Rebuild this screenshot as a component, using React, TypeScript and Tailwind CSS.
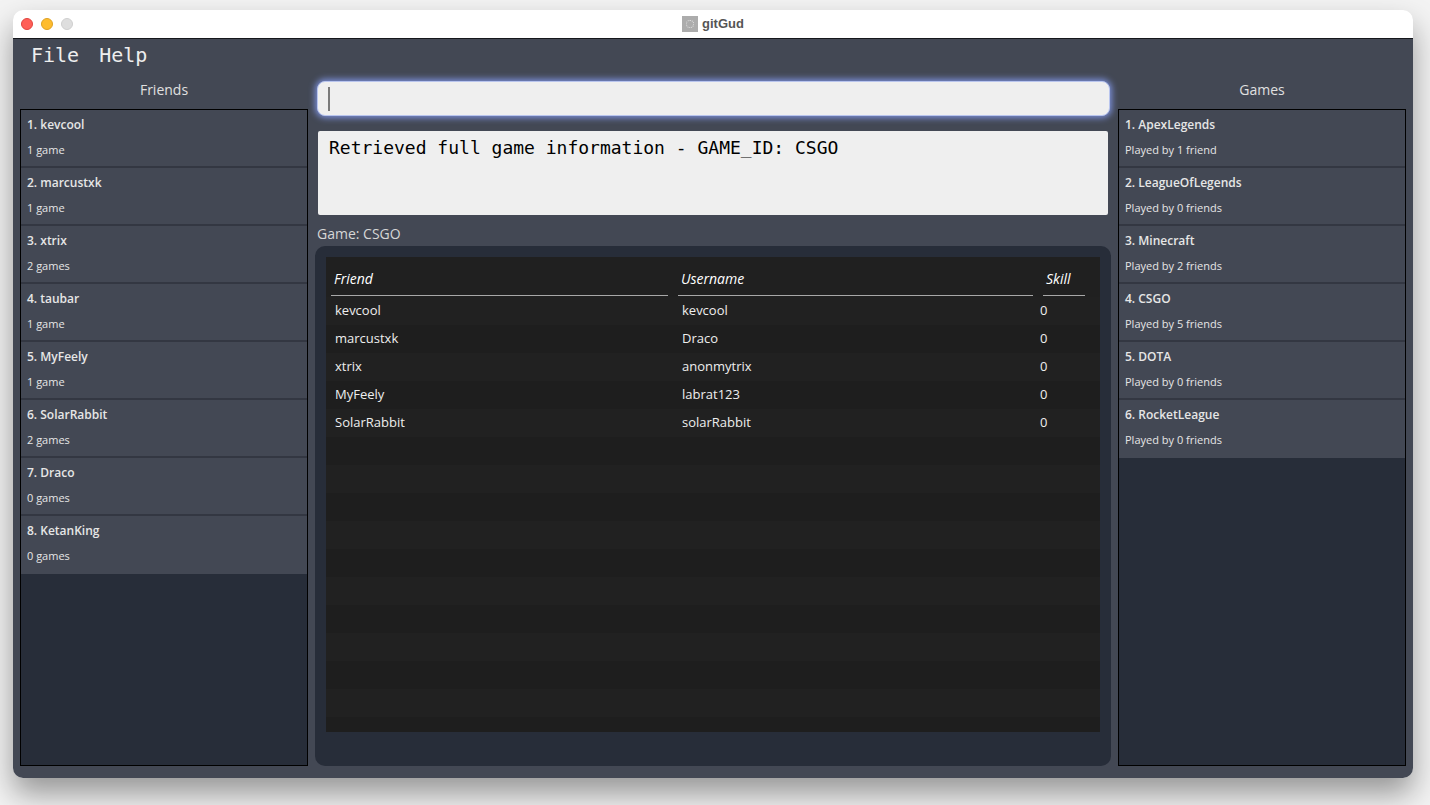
const friends = [
  ["1. kevcool", "1 game"],
  ["2. marcustxk", "1 game"],
  ["3. xtrix", "2 games"],
  ["4. taubar", "1 game"],
  ["5. MyFeely", "1 game"],
  ["6. SolarRabbit", "2 games"],
  ["7. Draco", "0 games"],
  ["8. KetanKing", "0 games"],
];

const games = [
  ["1. ApexLegends", "Played by 1 friend"],
  ["2. LeagueOfLegends", "Played by 0 friends"],
  ["3. Minecraft", "Played by 2 friends"],
  ["4. CSGO", "Played by 5 friends"],
  ["5. DOTA", "Played by 0 friends"],
  ["6. RocketLeague", "Played by 0 friends"],
];

const players = [
  ["kevcool", "kevcool", "0"],
  ["marcustxk", "Draco", "0"],
  ["xtrix", "anonmytrix", "0"],
  ["MyFeely", "labrat123", "0"],
  ["SolarRabbit", "solarRabbit", "0"],
];

const emptyRows = Array.from({ length: 11 }, (_, i) => i);

function SideList({ title, items }: { title: string; items: string[][] }) {
  return (
    <div className="w-[288px] shrink-0 flex flex-col">
      <div className="h-[37px] flex items-start justify-center pt-[8px] text-[14px] leading-[20px] text-[#e0e0e0]">
        {title}
      </div>
      <div className="flex-1 border border-black bg-[#272d39]">
        {items.map((item) => (
          <div
            key={item[0]}
            className="h-[58px] bg-[#434854] border-b-2 border-[#333742] last:border-b-0 px-[6px] pt-[6px]"
          >
            <div className="text-[12px] leading-[17px] font-semibold text-[#e6e6e6]">{item[0]}</div>
            <div className="mt-[9px] text-[11px] leading-[16px] text-[#e6e6e6]">{item[1]}</div>
          </div>
        ))}
      </div>
    </div>
  );
}

function ColHead({ label, className }: { label: string; className: string }) {
  return (
    <div className={className}>
      <div className="h-[39px] border-b border-[#a8a8a8] pl-[3px] pt-[12px] text-[14px] leading-[20px] italic text-white">
        {label}
      </div>
    </div>
  );
}

export default function App() {
  return (
    <div
      className="w-[1430px] h-[805px] bg-[#f3f3f3] pt-[10px] pl-[13px] overflow-hidden"
      style={{ fontFamily: '"Open Sans", sans-serif' }}
    >
      <div className="w-[1400px] h-[768px] rounded-[10px] overflow-hidden flex flex-col shadow-[0_16px_30px_rgba(0,0,0,0.38)]">
        <div className="h-[29px] shrink-0 bg-white border-b border-[#15171c] relative flex items-center justify-center rounded-t-[10px]">
          <div className="absolute left-[8px] top-[8px] flex gap-[8px]">
            <div className="w-[12px] h-[12px] rounded-full bg-[#ff5f57] border border-[#e0443e]" />
            <div className="w-[12px] h-[12px] rounded-full bg-[#febc2e] border border-[#dea123]" />
            <div className="w-[12px] h-[12px] rounded-full bg-[#dedede] border border-[#cfcfcf]" />
          </div>
          <div className="flex items-center gap-[4px]">
            <div className="w-[16px] h-[16px] bg-[#acacac] flex items-center justify-center">
              <div className="w-[8px] h-[8px] rounded-full border border-dotted border-[#e4e4e4]" />
            </div>
            <div
              className="text-[13px] leading-[16px] font-bold text-[#555555]"
              style={{ fontFamily: '"Liberation Sans", sans-serif' }}
            >
              gitGud
            </div>
          </div>
        </div>

        <div className="flex-1 bg-[#434854] flex flex-col">
          <div
            className="h-[33px] shrink-0 flex gap-[20px] pl-[18px] pt-[3px] text-[20px] leading-[27px] text-[#eeeeee]"
            style={{ fontFamily: '"DejaVu Sans Mono", monospace' }}
          >
            <span>File</span>
            <span>Help</span>
          </div>

          <div className="flex-1 flex pl-[7px] pr-[7px] pb-[12px] gap-[7px]">
            <SideList title="Friends" items={friends} />

            <div className="w-[796px] shrink-0 flex flex-col">
              <div className="h-[35px] ml-[2px] mr-[1px] mt-[9px] shrink-0 rounded-[8px] bg-[#efefef] border border-[#b9c5ee] shadow-[0_0_6px_2px_#7b8fd8] flex items-center pl-[10px]">
                <div className="w-[2px] h-[24px] bg-[#7a7a7a]" />
              </div>
              <div className="h-[84px] mt-[15px] mx-[3px] shrink-0 rounded-[2px] bg-[#efefef] pl-[11px] pt-[5px]">
                <div
                  className="text-[18px] leading-[24px] text-black"
                  style={{ fontFamily: '"DejaVu Sans Mono", monospace' }}
                >
                  Retrieved full game information - GAME_ID: CSGO
                </div>
              </div>
              <div className="h-[31px] shrink-0 pt-[9px] pl-[2px] text-[14px] leading-[20px] text-[#d6d6d6]">
                Game: CSGO
              </div>
              <div className="flex-1 rounded-[10px] bg-[#272d39] pt-[11px] px-[11px]">
                <div className="h-[475px] bg-[#202020] overflow-hidden">
                  <div className="flex h-[39px] pl-[5px] pr-[15px] gap-[10px]">
                    <ColHead label="Friend" className="w-[337px]" />
                    <ColHead label="Username" className="w-[355px]" />
                    <ColHead label="Skill" className="w-[42px]" />
                  </div>
                  <div className="pt-[1px]">
                    {players.map((p, i) => (
                      <div
                        key={p[0]}
                        className={`flex h-[28px] items-center text-[13px] text-[#eeeeee] ${i % 2 === 0 ? "bg-[#212121]" : "bg-[#1e1e1e]"}`}
                      >
                        <div className="w-[347px] shrink-0 pl-[9px]">{p[0]}</div>
                        <div className="w-[362px] shrink-0 pl-[9px]">{p[1]}</div>
                        <div className="pl-[5px]">{p[2]}</div>
                      </div>
                    ))}
                    {emptyRows.map((n) => (
                      <div key={n} className={`h-[28px] ${n % 2 === 0 ? "bg-[#1e1e1e]" : "bg-[#212121]"}`} />
                    ))}
                  </div>
                </div>
              </div>
            </div>

            <SideList title="Games" items={games} />
          </div>
        </div>
      </div>
    </div>
  );
}
